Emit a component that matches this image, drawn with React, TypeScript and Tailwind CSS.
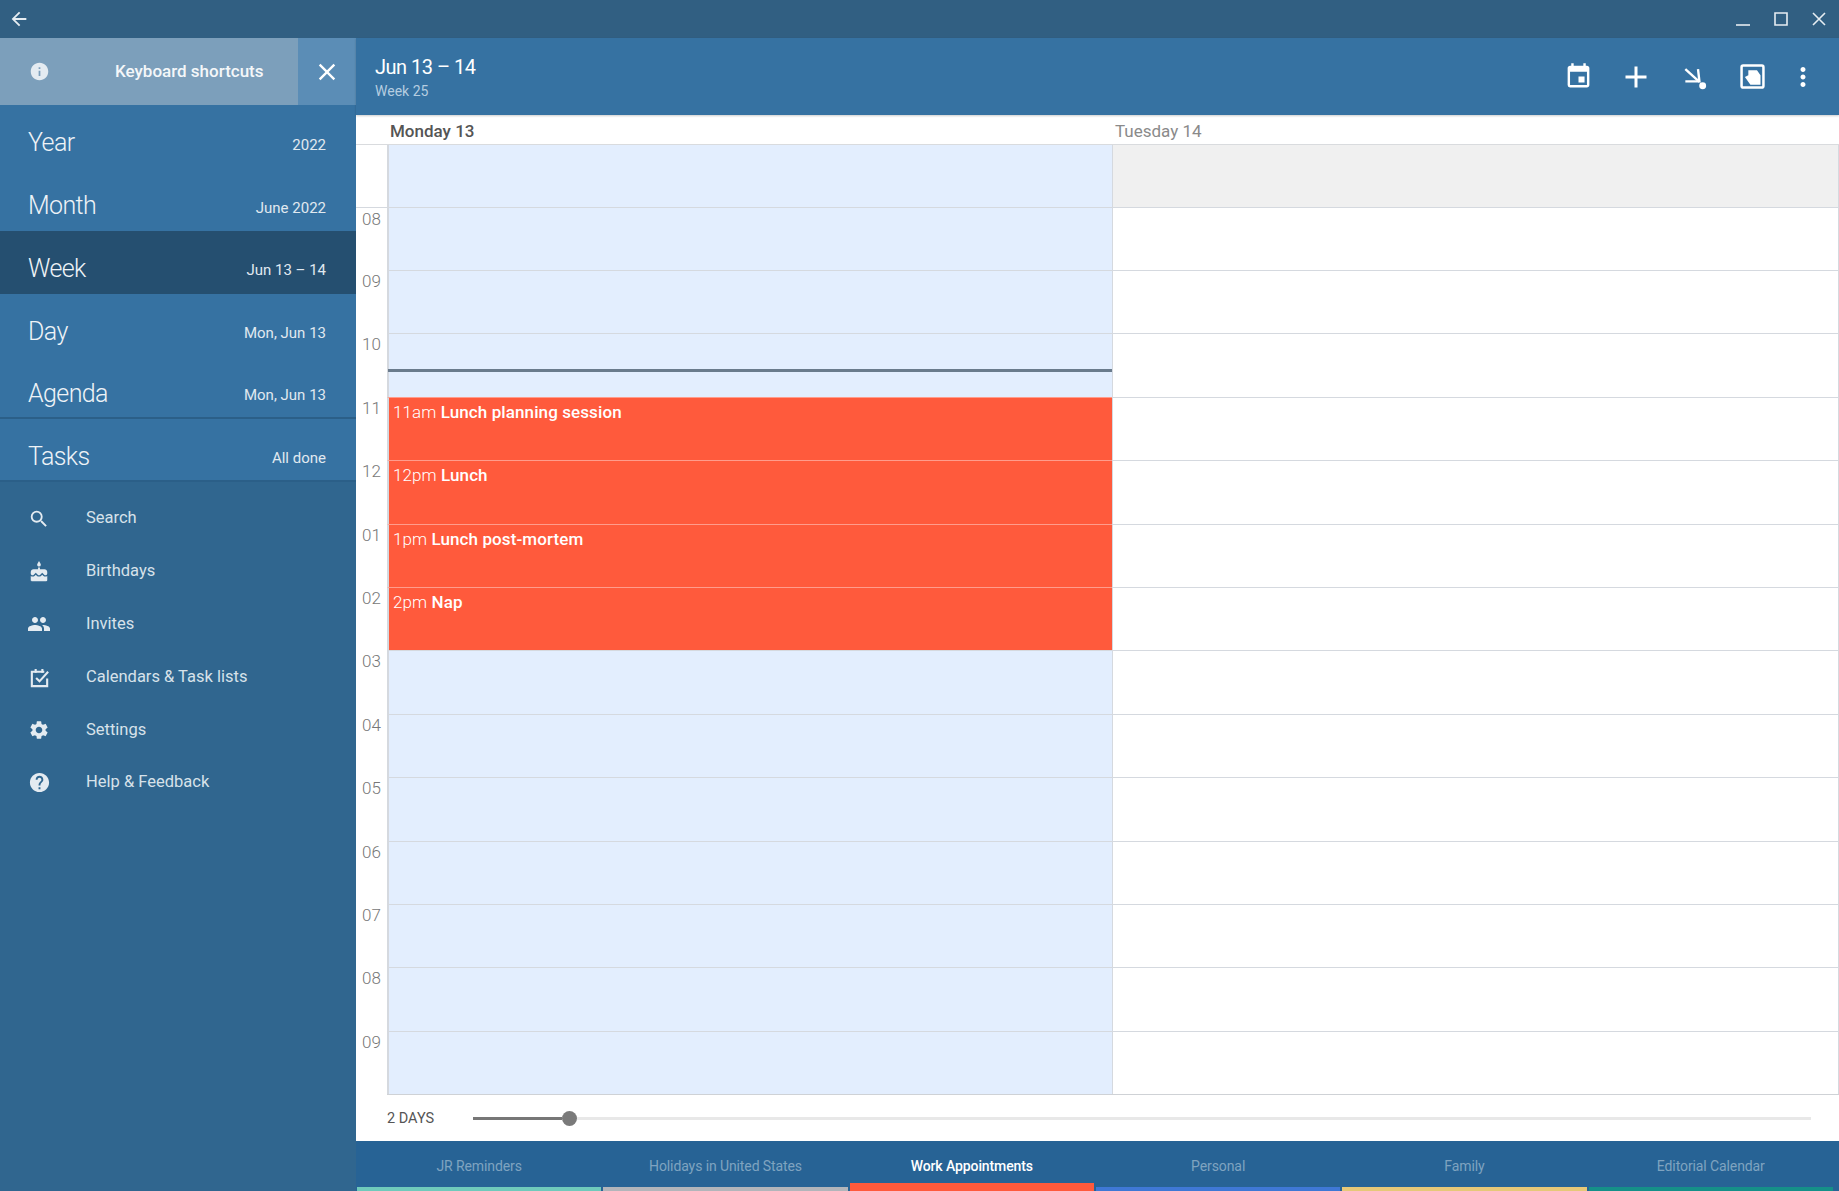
import { MdArrowBack, MdInfo, MdClose, MdSearch, MdCake, MdPeople, MdSettings, MdHelp, MdEvent, MdAdd, MdMoreVert } from "react-icons/md";

const views = [
  { name: "Year", sub: "2022" },
  { name: "Month", sub: "June 2022" },
  { name: "Week", sub: "Jun 13 – 14", active: true },
  { name: "Day", sub: "Mon, Jun 13" },
  { name: "Agenda", sub: "Mon, Jun 13", divider: true },
  { name: "Tasks", sub: "All done", divider: true },
];

const CalendarCheckIcon = ({ className }: { className?: string }) => (
  <svg viewBox="0 0 24 24" className={className} fill="none" stroke="currentColor" strokeWidth="2.2">
    <path d="M20 13v8H4V6h13" />
    <path d="M8 3v4M15 3v4" />
    <path d="M8.5 12.5l3.5 3.5 9-10" />
  </svg>
);

const links = [
  { label: "Search", icon: <MdSearch className="h-[22px] w-[22px]" /> },
  { label: "Birthdays", icon: <MdCake className="h-[22px] w-[22px]" /> },
  { label: "Invites", icon: <MdPeople className="h-6 w-6" /> },
  { label: "Calendars & Task lists", icon: <CalendarCheckIcon className="h-[23px] w-[23px]" /> },
  { label: "Settings", icon: <MdSettings className="h-[22px] w-[22px]" /> },
  { label: "Help & Feedback", icon: <MdHelp className="h-[23px] w-[23px]" /> },
];

const hours = ["08", "09", "10", "11", "12", "01", "02", "03", "04", "05", "06", "07", "08", "09"];

const events: Record<string, { time: string; title: string }> = {
  "3": { time: "11am", title: "Lunch planning session" },
  "4": { time: "12pm", title: "Lunch" },
  "5": { time: "1pm", title: "Lunch post-mortem" },
  "6": { time: "2pm", title: "Nap" },
};

const tabs = [
  { name: "JR Reminders", color: "bg-[#6fcabb]" },
  { name: "Holidays in United States", color: "bg-[#b2b5ba]" },
  { name: "Work Appointments", color: "bg-[#ff5a3c]", active: true },
  { name: "Personal", color: "bg-[#3f78d5]" },
  { name: "Family", color: "bg-[#e6c878]" },
  { name: "Editorial Calendar", color: "bg-[#159088]" },
];

const Sidebar = () => (
  <aside className="flex w-[356px] shrink-0 flex-col bg-[#30668f]">
    <div className="flex h-[67px] shrink-0">
      <div className="flex w-[298px] items-center bg-[#7c9fbb] pl-[29px]">
        <MdInfo className="h-[21px] w-[21px] text-[#e4ebf1]" />
        <span className="ml-[65px] text-[17px] font-medium text-[#f4f7f9]">Keyboard shortcuts</span>
      </div>
      <div className="flex flex-1 items-center justify-center bg-[#5b8db6]">
        <MdClose className="h-[28px] w-[28px] text-white" />
      </div>
    </div>
    {views.map(v => (
      <div
        key={v.name}
        className={`flex h-[62.9px] shrink-0 items-center justify-between pl-[28px] pr-[30px] pt-[13px] text-white ${
          v.active ? "bg-[#254f70]" : "bg-[#3672a2]"
        } ${v.divider ? "border-b-2 border-[#2b5f88]" : ""}`}
      >
        <span className="text-[25px] font-light tracking-[-0.6px] text-[#eef3f7]">{v.name}</span>
        <span className="pt-[4px] text-[15px] text-[#e0e9f0]">{v.sub}</span>
      </div>
    ))}
    <div className="flex flex-col pt-[10px]">
      {links.map(l => (
        <div key={l.label} className="flex h-[52.8px] items-center text-[#d7e2ea]">
          <span className="flex w-[78px] shrink-0 justify-center text-[#e4ebf1]">{l.icon}</span>
          <span className="-ml-[1px] pl-[9px] text-[16.5px]">{l.label}</span>
        </div>
      ))}
    </div>
  </aside>
);

const Toolbar = () => (
  <header className="flex h-[77px] shrink-0 items-center justify-between bg-[#3672a2] pl-[19px] pr-[14px] shadow-[0_1px_2px_rgba(0,0,0,0.2)]">
    <div className="flex flex-col pt-[1px]">
      <span className="text-[20px] leading-[27px] tracking-[-0.5px] text-white">Jun 13 – 14</span>
      <span className="pt-[1px] text-[14px] leading-[18px] text-[#b5cde0]">Week 25</span>
    </div>
    <div className="flex items-center text-white">
      <span className="flex w-[58px] justify-center"><MdEvent className="h-[29px] w-[29px]" /></span>
      <span className="flex w-[58px] justify-center"><MdAdd className="h-[36px] w-[36px]" /></span>
      <span className="flex w-[58px] justify-center">
        <svg viewBox="0 0 24 24" className="h-[26px] w-[26px]" fill="none" stroke="currentColor" strokeWidth="2.2">
          <path d="M4 4.7L17 16.5" />
          <path d="M4 16h13L15.7 4.7" />
          <circle cx="20" cy="20" r="3.2" fill="currentColor" stroke="none" />
        </svg>
      </span>
      <span className="flex w-[58px] justify-center">
        <svg viewBox="0 0 24 24" className="h-[25px] w-[25px]" fill="currentColor" stroke="none">
          <rect x="1.5" y="1.5" width="21" height="21" rx="1.5" fill="none" stroke="currentColor" strokeWidth="2.4" />
          <path d="M8 6h8.3l3.4 4.7V20H10L4.7 12.5 8 10.7z" />
        </svg>
      </span>
      <span className="flex w-[44px] justify-center"><MdMoreVert className="h-[30px] w-[30px]" /></span>
    </div>
  </header>
);

const Grid = () => (
  <div className="relative flex flex-col">
    <div className="flex h-[30px] shrink-0 items-center border-b border-[#d9dbde] pt-[4px] text-[17px]">
      <span className="w-[31px] shrink-0" />
      <span className="w-[725px] shrink-0 pl-[3px] font-medium text-[#555]">Monday 13</span>
      <span className="pl-[3px] text-[#8a8a8a]">Tuesday 14</span>
    </div>
    <div className="flex h-[61.6px] shrink-0">
      <span className="w-[31px] shrink-0" />
      <span className="w-[725px] shrink-0 border-l-2 border-[#d5d9df] bg-[#e3eefe]" />
      <span className="flex-1 border-l border-r border-[#d5d9df] bg-[#f0f0f0]" />
    </div>
    {hours.map((h, i) => {
      const ev = events[String(i)];
      return (
        <div key={i} className="flex h-[63.4px] shrink-0">
          <span className={`w-[31px] shrink-0 pl-[6px] pt-[1px] text-[17px] font-light leading-[21px] text-[#777] ${i === 0 ? "border-t border-[#d5d9df]" : ""}`}>{h}</span>
          <span className={`w-[725px] shrink-0 border-l-2 border-t border-[#d5d9df] ${ev ? "border-t-[#ff9c8c] bg-[#ff5a3c] pl-[4px] pt-[2px] text-[17px] leading-[24px] tracking-[0.1px] text-white" : "bg-[#e3eefe]"}`}>
            {ev && (
              <>
                <span className="font-light">{ev.time} </span>
                <span className="font-medium">{ev.title}</span>
              </>
            )}
          </span>
          <span className="flex-1 border-l border-r border-t border-[#d5d9df]" />
        </div>
      );
    })}
    <div className="ml-[31px] border-t border-[#cfd2d6]" />
    {/* current time */}
    <div className="absolute left-[32px] top-[254px] h-[3px] w-[724px] bg-[#6a7b8c]" />
  </div>
);

const SliderRow = () => (
  <div className="flex flex-1 items-center pl-[31px] pr-[28px] pt-[1px]">
    <span className="w-[86px] shrink-0 text-[14.5px] text-[#555]">2 DAYS</span>
    <span className="h-[3px] w-[89px] bg-[#777]" />
    <span className="h-[15px] w-[15px] shrink-0 rounded-full bg-[#7a7a7a]" />
    <span className="h-[3px] flex-1 bg-[#e8e8e8]" />
  </div>
);

const Tabs = () => (
  <div className="flex h-[50px] shrink-0 gap-[2px] bg-[#276395] pl-[1px] pr-[6px]">
    {tabs.map(t => (
      <div key={t.name} className="relative flex flex-1 justify-center pt-[15px]">
        <span className={`text-[14px] leading-[20px] tracking-[-0.1px] ${t.active ? "font-medium text-white" : "text-[#7fa3c0]"}`}>{t.name}</span>
        <span className={`absolute inset-x-0 bottom-0 ${t.active ? "h-[8px]" : "h-[4px]"} ${t.color}`} />
      </div>
    ))}
  </div>
);

export default function App() {
  return (
    <div className="flex h-[1191px] w-[1839px] flex-col overflow-hidden bg-white font-['Roboto',sans-serif]">
      <div className="flex h-[38px] shrink-0 items-center justify-between bg-[#315f82] pl-[8px] pr-[13px] text-[#e6edf2]">
        <MdArrowBack className="h-[22px] w-[22px]" />
        <div className="flex items-center gap-[24px]">
          <svg viewBox="0 0 14 14" className="h-[14px] w-[14px]" fill="none" stroke="currentColor" strokeWidth="1.6"><path d="M0 13h14" /></svg>
          <svg viewBox="0 0 14 14" className="h-[14px] w-[14px]" fill="none" stroke="currentColor" strokeWidth="1.6"><path d="M1 1h12v12H1z" /></svg>
          <svg viewBox="0 0 14 14" className="h-[14px] w-[14px]" fill="none" stroke="currentColor" strokeWidth="1.6"><path d="M1 1l12 12M13 1L1 13" /></svg>
        </div>
      </div>
      <div className="flex min-h-0 flex-1">
        <Sidebar />
        <main className="flex min-w-0 flex-1 flex-col">
          <Toolbar />
          <Grid />
          <SliderRow />
          <Tabs />
        </main>
      </div>
    </div>
  );
}
